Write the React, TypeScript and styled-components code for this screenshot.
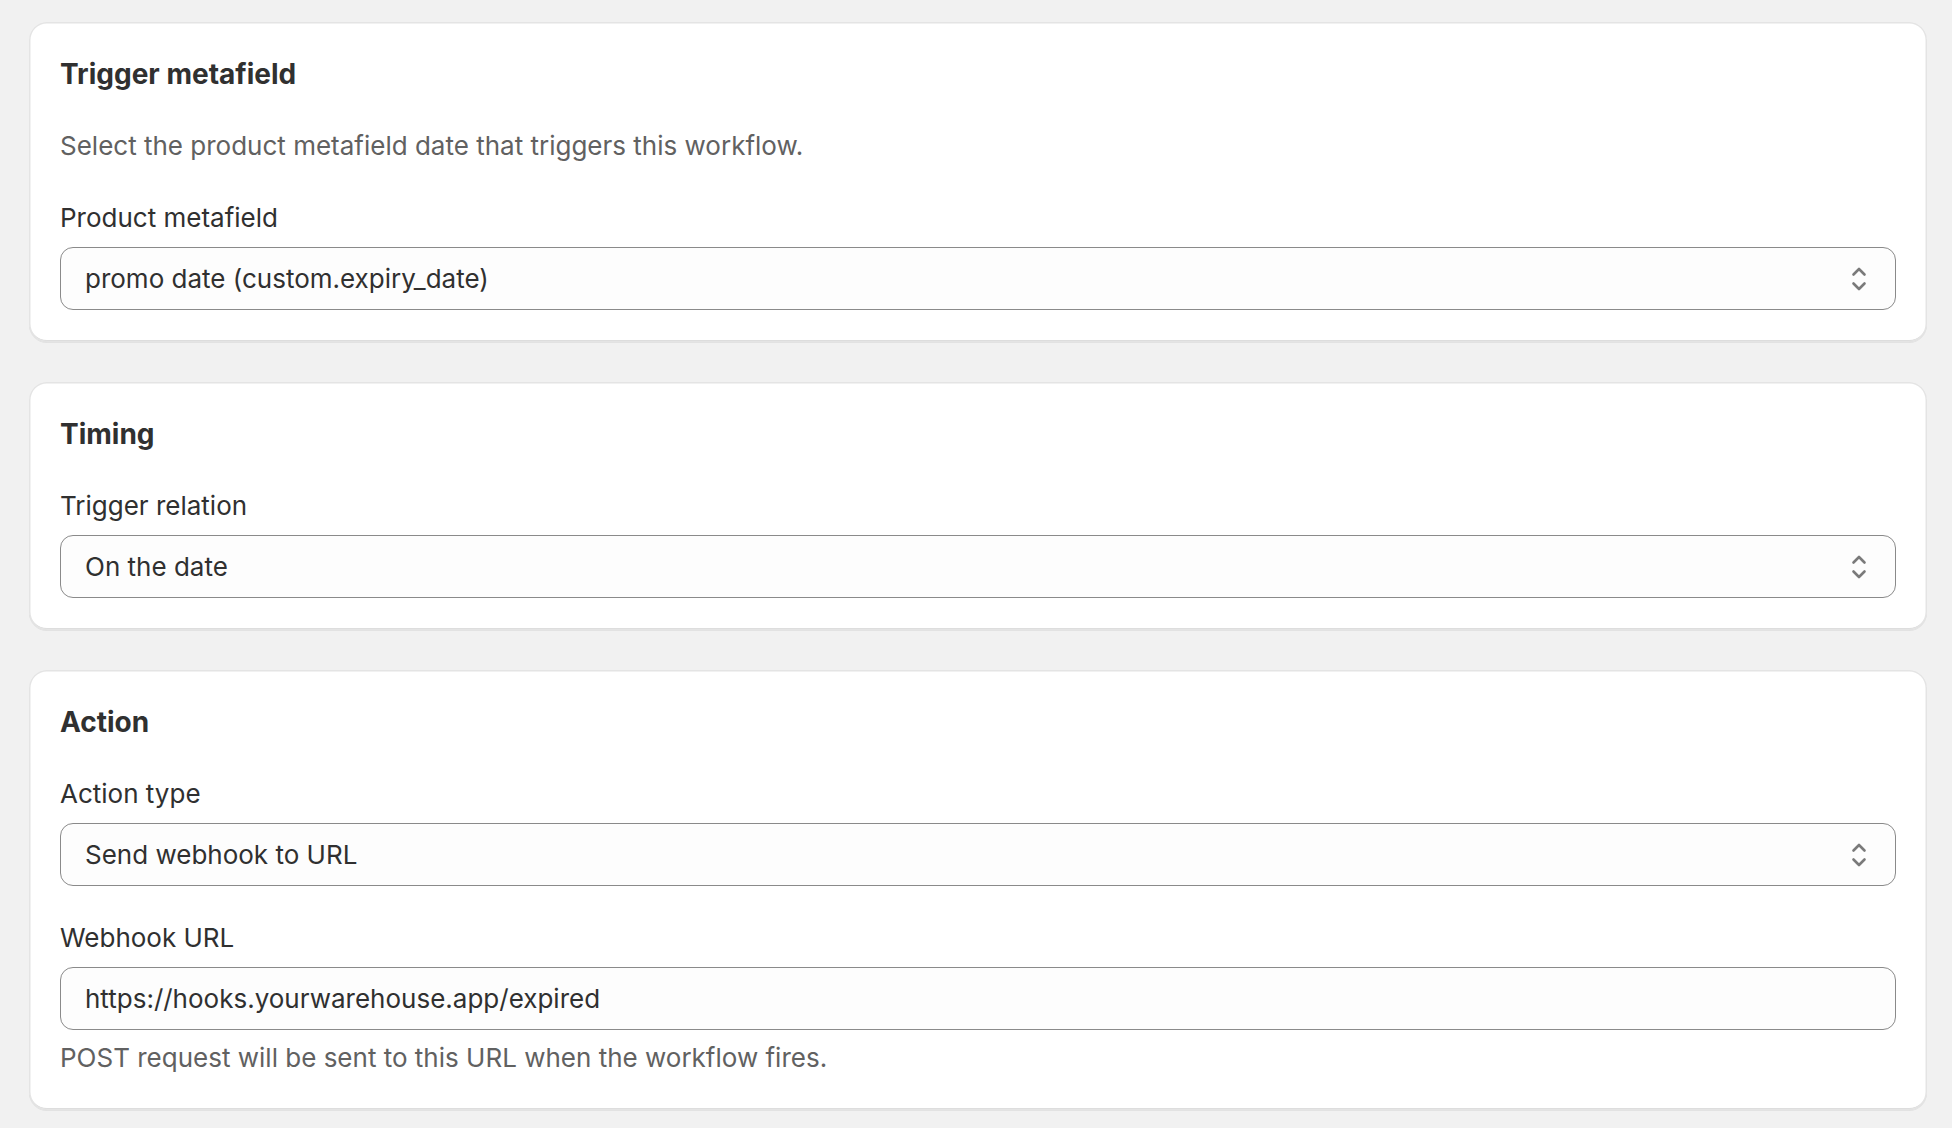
import React from "react"
import styled, { createGlobalStyle } from "styled-components"

const GlobalStyle = createGlobalStyle`
  html, body {
    margin: 0;
    padding: 0;
    background: #f1f1f1;
  }

  body {
    font-family: Inter, "Noto Sans", "Liberation Sans", sans-serif;
    color: #303030;
    -webkit-font-smoothing: antialiased;
  }
`

const Page = styled.main`
  display: flex;
  flex-direction: column;
  gap: 40px;
  padding: 22px 25px 20px 29px;
`

const Card = styled.section`
  display: flex;
  flex-direction: column;
  padding: 32px 31px 32px;
  background: #ffffff;
  border-radius: 18px;
  box-shadow:
    inset 0 0 0 1.5px #e4e4e4,
    inset 0 -2px 0 #d6d6d6,
    0 1px 0 rgba(26, 26, 26, 0.07);
`

const Title = styled.h2`
  margin: 0;
  font-size: 28px;
  line-height: 40px;
  font-weight: 650;
  color: #303030;
`

const Description = styled.p`
  margin: 32px 0 0;
  font-size: 26px;
  line-height: 40px;
  font-weight: 400;
  color: #616161;
`

const Field = styled.div`
  display: flex;
  flex-direction: column;
  margin-top: 32px;
`

const Label = styled.label`
  font-size: 26px;
  line-height: 40px;
  font-weight: 400;
  color: #303030;
`

const Control = styled.div`
  display: flex;
  align-items: center;
  height: 63px;
  margin-top: 9px;
  padding: 0 24px;
  box-sizing: border-box;
  background: #fdfdfd;
  border: 1px solid #8a8a8a;
  border-radius: 13px;
  font-size: 26px;
  font-weight: 400;
  color: #303030;
`

const Value = styled.span`
  flex: 1;
  white-space: nowrap;
`

const Chevrons = styled.svg`
  flex: none;
  width: 16px;
  height: 28px;
  margin-right: 4px;
`

const Help = styled.p`
  margin: 8px 0 0;
  font-size: 26px;
  line-height: 40px;
  font-weight: 400;
  color: #616161;
`

const SelectIcon = () => (
  <Chevrons viewBox="0 0 16 28" fill="none">
    <path
      d="M2.5 9.5 8 4l5.5 5.5M2.5 18.5 8 24l5.5-5.5"
      stroke="#7a7a7a"
      strokeWidth="2.6"
      strokeLinecap="round"
      strokeLinejoin="round"
    />
  </Chevrons>
)

interface SelectFieldProps {
  id: string
  label: string
  value: string
}

const SelectField = ({ id, label, value }: SelectFieldProps) => (
  <Field>
    <Label htmlFor={id}>{label}</Label>
    <Control id={id} role="combobox">
      <Value>{value}</Value>
      <SelectIcon />
    </Control>
  </Field>
)

const App = () => (
  <>
    <GlobalStyle />
    <Page>
      <Card>
        <Title>Trigger metafield</Title>
        <Description>
          Select the product metafield date that triggers this workflow.
        </Description>
        <SelectField
          id="metafield"
          label="Product metafield"
          value="promo date (custom.expiry_date)"
        />
      </Card>

      <Card>
        <Title>Timing</Title>
        <SelectField id="relation" label="Trigger relation" value="On the date" />
      </Card>

      <Card>
        <Title>Action</Title>
        <SelectField id="action" label="Action type" value="Send webhook to URL" />
        <Field>
          <Label htmlFor="webhook">Webhook URL</Label>
          <Control id="webhook">
            <Value>https://hooks.yourwarehouse.app/expired</Value>
          </Control>
          <Help>POST request will be sent to this URL when the workflow fires.</Help>
        </Field>
      </Card>
    </Page>
  </>
)

export default App
